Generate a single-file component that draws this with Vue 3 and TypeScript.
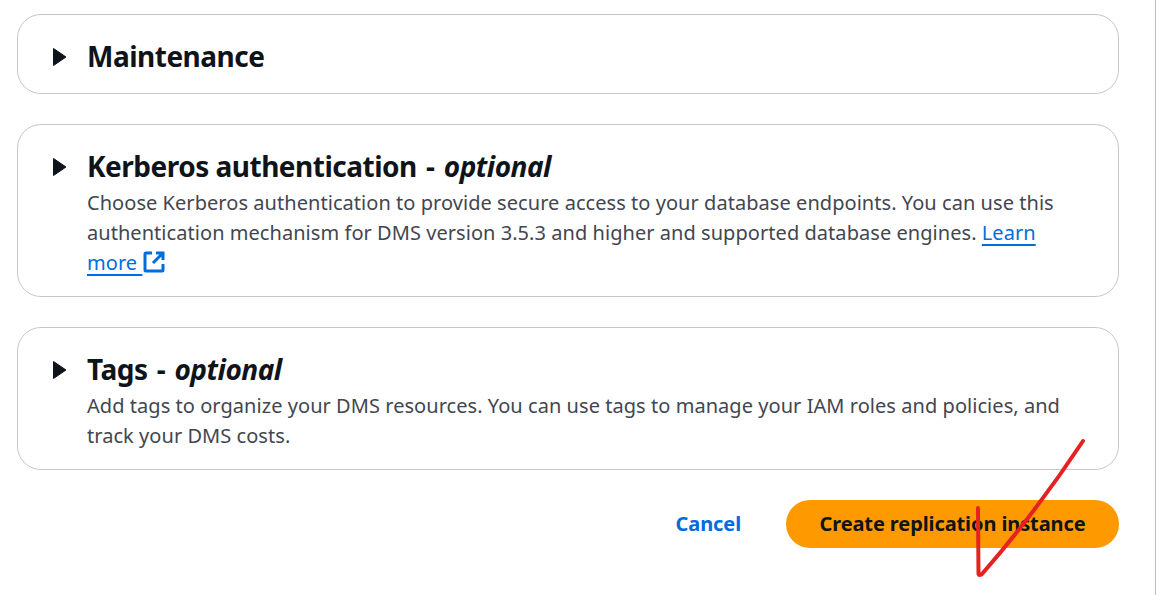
<script setup lang="ts">
interface Section {
  id: number
  title: string
  optional: boolean
  text?: string
  link?: boolean
}

const sections: Section[] = [
  { id: 1, title: 'Maintenance', optional: false },
  {
    id: 2,
    title: 'Kerberos authentication',
    optional: true,
    text: 'Choose Kerberos authentication to provide secure access to your database endpoints. You can use this authentication mechanism for DMS version 3.5.3 and higher and supported database engines. ',
    link: true
  },
  {
    id: 3,
    title: 'Tags',
    optional: true,
    text: 'Add tags to organize your DMS resources. You can use tags to manage your IAM roles and policies, and track your DMS costs.'
  }
]
</script>

<template>
  <div class="page">
    <div class="content">
      <section class="card" v-for="section in sections" :key="section.id">
        <svg class="caret" width="16" height="20" viewBox="0 0 16 20">
          <path d="M1.5 1.5 L14 10 L1.5 18.5 Z" fill="#0f141a" stroke="#0f141a" stroke-width="1" stroke-linejoin="round" />
        </svg>
        <div class="card-body">
          <h2 class="card-title">
            {{ section.title }}<span class="dash" v-if="section.optional"> - </span><i v-if="section.optional">optional</i>
          </h2>
          <p class="card-text" v-if="section.text">
            {{ section.text }}<a class="link" v-if="section.link" href="#">Learn more <svg class="ext" width="22" height="22" viewBox="0 0 22 22">
                <path d="M9 2 H3 Q2 2 2 3 V19 Q2 20 3 20 H19 Q20 20 20 19 V13 M13 2 H20 V9 M20 2 L10 12" fill="none" stroke="#006ce0" stroke-width="3" />
              </svg></a>
          </p>
        </div>
      </section>

      <div class="actions">
        <a class="cancel" href="#">Cancel</a>
        <button class="submit">Create replication instance</button>
      </div>
    </div>

    <!-- red pen mark drawn over the screenshot -->
    <svg class="mark" width="120" height="150" viewBox="0 0 120 150">
      <path d="M8 76 L8.5 142 Q9 144 12 142 Q66 80 113 9" fill="none" stroke="#e52222" stroke-width="4" stroke-linecap="round" stroke-linejoin="round" />
    </svg>
    <div class="scrollbar"></div>
  </div>
</template>

<style scoped>
.page {
  position: relative;
  display: flex;
  width: 1158px;
  height: 595px;
  overflow: hidden;
  background: #ffffff;
  font-family: "Noto Sans", "Open Sans", sans-serif;
  color: #0f141a;
}

.content {
  flex: 1;
  display: flex;
  flex-direction: column;
  gap: 30px;
  padding: 14px 36px 0 17px;
}

.card {
  display: flex;
  align-items: flex-start;
  gap: 19px;
  padding: 21px 34px 17px 34px;
  border: 1px solid #c6c6cd;
  border-radius: 24px;
  box-sizing: border-box;
}

.caret {
  flex-shrink: 0;
  margin-top: 11px;
}

.card-body {
  flex: 1;
  min-width: 0;
}

.card-title {
  margin: 0;
  font-size: 28px;
  line-height: 40px;
  font-weight: 700;
  letter-spacing: -0.5px;
}

.card-title i {
  font-weight: 700;
}

.dash {
  margin: 0 2.5px;
}

.card-text {
  margin: 2px 0 1px;
  font-size: 20px;
  line-height: 30px;
  letter-spacing: 0.05px;
  color: #424650;
}

.link {
  color: #006ce0;
  text-decoration: underline;
  text-underline-offset: 4px;
}

.ext {
  vertical-align: -3px;
  margin-left: 1px;
}

.actions {
  display: flex;
  justify-content: flex-end;
  align-items: center;
  gap: 45px;
}

.cancel {
  color: #006ce0;
  font-size: 20px;
  font-weight: 700;
  letter-spacing: -0.1px;
  text-decoration: none;
  padding-bottom: 2px;
}

.submit {
  width: 333px;
  height: 48px;
  border: none;
  border-radius: 24px;
  background: #ff9900;
  color: #0f141a;
  font-family: inherit;
  font-size: 20px;
  font-weight: 700;
  letter-spacing: -0.1px;
  padding: 0 0 2px;
}

.mark {
  position: absolute;
  left: 970px;
  top: 432px;
}

.scrollbar {
  width: 3px;
  flex-shrink: 0;
  background: #ffffff;
  border-left: 1px solid #bdbdbd;
  box-sizing: border-box;
}
</style>
